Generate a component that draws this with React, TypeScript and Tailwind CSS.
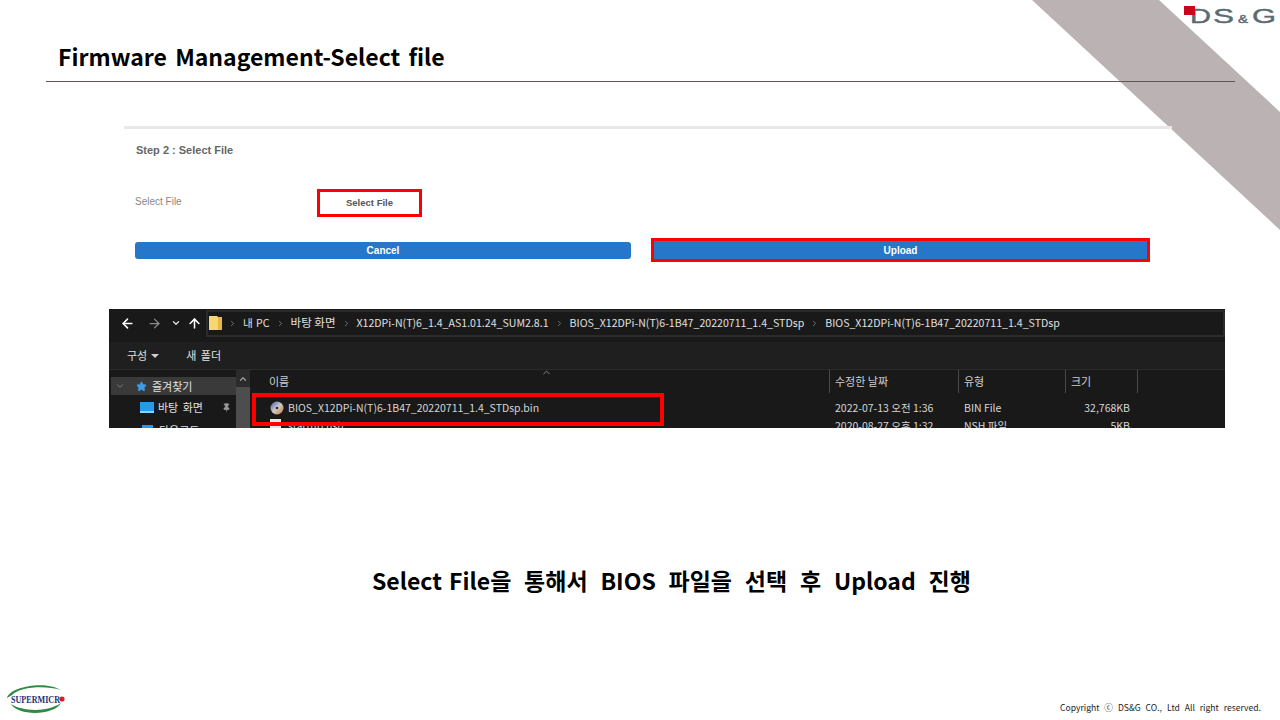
import React from 'react';
import { ArrowLeft, ArrowRight, ArrowUp, ChevronDown, ChevronRight, ChevronUp, Pin, Star } from 'lucide-react';

const FileRow = ({ icon, name, date, type, size }: { icon: React.ReactNode; name: string; date: string; type: string; size: string }) => (
    <div className="flex items-center h-[25px] text-[10.5px] text-[#d6d6d6]">
        <div className="w-[18px] ml-[20px] flex justify-start">{icon}</div>
        <div className="w-[547px] truncate">{name}</div>
        <div className="w-[129px]">{date}</div>
        <div className="w-[73px]">{type}</div>
        <div className="w-[93px] text-right">{size}</div>
    </div>
);

const Crumb = ({ label }: { label: string }) => (
    <>
        <ChevronRight size={9} className="text-[#8a8a8a] mx-[6px] shrink-0" />
        <span>{label}</span>
    </>
);

const DiscIcon = () => (
    <svg width="14" height="14" viewBox="0 0 14 14">
        <defs>
            <linearGradient id="disc" x1="0" y1="0" x2="1" y2="1">
                <stop offset="0" stopColor="#4a55b5" />
                <stop offset="0.5" stopColor="#cfc9c4" />
                <stop offset="1" stopColor="#c9762f" />
            </linearGradient>
        </defs>
        <circle cx="7" cy="7" r="6.5" fill="url(#disc)" />
        <circle cx="7" cy="7" r="1.8" fill="#2a2a2a" stroke="#eee" strokeWidth="0.6" />
    </svg>
);

const Explorer = () => (
    <div className="ml-[109px] w-[1116px] h-[119px] overflow-hidden bg-[#191919] flex flex-col font-['Noto_Sans_CJK_KR',sans-serif] text-[#e0e0e0]">
        {/* address bar */}
        <div className="h-[28px] mb-[5px] shrink-0 flex items-center bg-[#191919]">
            <ArrowLeft size={15} strokeWidth={2.5} className="ml-[11px] text-white" />
            <ArrowRight size={15} strokeWidth={2} className="ml-[12px] text-[#8c8c8c]" />
            <ChevronDown size={10} strokeWidth={3} className="ml-[9px] text-[#e0e0e0]" />
            <ArrowUp size={15} strokeWidth={2.5} className="ml-[6px] text-white" />
            <div className="ml-[4px] flex-1 h-[27px] border-2 border-[#2b2b2b] flex items-center text-[10.6px] whitespace-nowrap pl-[1px]">
                <svg width="13" height="16" viewBox="0 0 13 16" className="shrink-0">
                    <path d="M0 1h8l1 1h4v13H0z" fill="#f7d774" />
                    <path d="M9 2h4v13H9z" fill="#e8b93f" />
                </svg>
                <span className="contents [word-spacing:1px]"><Crumb label="내 PC" /></span>
                <span className="contents text-[11.5px]"><Crumb label="바탕 화면" /></span>
                <Crumb label="X12DPi-N(T)6_1.4_AS1.01.24_SUM2.8.1" />
                <Crumb label="BIOS_X12DPi-N(T)6-1B47_20220711_1.4_STDsp" />
                <Crumb label="BIOS_X12DPi-N(T)6-1B47_20220711_1.4_STDsp" />
            </div>
        </div>
        {/* toolbar */}
        <div className="h-[28px] shrink-0 flex items-center bg-[#1f1f1f] text-[11px] border-b border-[#2b2b2b]">
            <span className="ml-[18px]">구성</span>
            <span className="ml-[4px] w-0 h-0 border-x-[4px] border-x-transparent border-t-[4px] border-t-[#d0d0d0]" />
            <span className="ml-[27px] [word-spacing:2px]">새 폴더</span>
        </div>
        <div className="flex flex-1 min-h-0">
            {/* nav pane */}
            <div className="w-[127px] shrink-0 pt-[7px] text-[11px] bg-[#191919]">
                <div className="flex items-center h-[18px] bg-[#3a3a3a] ml-[2px]">
                    <ChevronDown size={10} className="ml-[4px] text-[#8a8a8a]" />
                    <Star size={11} className="ml-[11px] text-[#3d9be9] fill-[#3d9be9]" />
                    <span className="ml-[5px]">즐겨찾기</span>
                </div>
                <div className="flex items-center h-[24px] ml-[31px]">
                    <span className="w-[14px] h-[11px] bg-[#1f9bf0] border-b-2 border-[#8fd0ff]" />
                    <span className="ml-[4px] [word-spacing:2px]">바탕 화면</span>
                    <Pin size={9} className="ml-[19px] text-[#9a9a9a] fill-[#9a9a9a]" />
                </div>
                <div className="flex items-center h-[22px] ml-[33px]">
                    <span className="w-[11px] h-[11px] bg-[#1f9bf0]" />
                    <span className="ml-[6px]">다운로드</span>
                </div>
            </div>
            {/* scrollbar */}
            <div className="w-[14px] shrink-0 bg-[#2b2b2b] flex flex-col items-center">
                <ChevronUp size={10} strokeWidth={3} className="text-[#9a9a9a] mt-[4px] mb-[3px]" />
                <div className="w-full flex-1 bg-[#4d4d4d]" />
            </div>
            {/* file list */}
            <div className="flex-1 min-w-0 bg-[#191919]">
                <div className="relative flex items-center h-[23px] text-[11px] text-[#cfcfcf]">
                    <span className="ml-[19px] w-[560px]">이름</span>
                    <ChevronUp size={11} className="absolute left-[291px] top-[-3px] text-[#8a8a8a]" />
                    <span className="w-[129px] h-full flex items-center border-l border-[#4a4a4a] pl-[5px]">수정한 날짜</span>
                    <span className="w-[107px] h-full flex items-center border-l border-[#4a4a4a] pl-[5px]">유형</span>
                    <span className="w-[73px] h-full flex items-center border-x border-[#4a4a4a] pl-[5px]">크기</span>
                </div>
                <div className="relative pt-[2px]">
                    <div className="absolute left-[2px] top-0 w-[412px] h-[33px] border-4 border-[#ff0000]" />
                    <FileRow icon={<DiscIcon />} name="BIOS_X12DPi-N(T)6-1B47_20220711_1.4_STDsp.bin" date="2022-07-13 오전 1:36" type="BIN File" size="32,768KB" />
                    <div className="-mt-[7px]">
                        <FileRow icon={<span className="block w-[11px] h-[14px] bg-[#dfe8f2]" />} name="startup.nsh" date="2020-08-27 오후 1:32" type="NSH 파일" size="5KB" />
                    </div>
                </div>
            </div>
        </div>
    </div>
);

const App: React.FC = () => {
    return (
        <div className="relative w-[1280px] h-[720px] overflow-hidden bg-white flex flex-col font-['Noto_Sans_CJK_KR',sans-serif]">
            {/* diagonal band */}
            <svg className="absolute left-0 top-0" width="1280" height="720" viewBox="0 0 1280 720">
                <polygon points="1032,0 1159,0 1280,112 1280,230" fill="#bbb3b3" />
            </svg>

            {/* DS&G logo */}
            <svg className="absolute left-[1180px] top-0" width="100" height="30" viewBox="0 0 100 30" fontFamily="'Liberation Sans', sans-serif" fill="#5b6b72" stroke="#5b6b72" strokeWidth="0.4">
                <text x="10" y="23" fontSize="19.5" textLength="21" lengthAdjust="spacingAndGlyphs">D</text>
                <text x="33" y="23" fontSize="19.5" textLength="21" lengthAdjust="spacingAndGlyphs">S</text>
                <text x="58" y="23" fontSize="10" textLength="10" lengthAdjust="spacingAndGlyphs">&amp;</text>
                <text x="72" y="23" fontSize="19.5" textLength="24" lengthAdjust="spacingAndGlyphs">G</text>
                <rect x="4" y="6" width="11" height="9" fill="#d0021b" stroke="none" />
            </svg>

            {/* title */}
            <div className="relative h-[81px] shrink-0 pl-[58px] pt-[38px]">
                <h1 className="text-[23px] leading-[36px] font-bold text-black whitespace-nowrap [word-spacing:3px]">Firmware Management-Select file</h1>
            </div>
            <div className="relative ml-[46px] w-[1189px] h-px bg-[#5f5757] shrink-0" />

            {/* step panel */}
            <div className="relative ml-[124px] mt-[44px] w-[1048px] h-[183px] shrink-0 border-t-[3px] border-[#e8e8e8] font-['Liberation_Sans',sans-serif]">
                <div className="ml-[12px] mt-[14px] text-[11px] leading-[14px] font-bold text-[#666666]">Step 2 : Select File</div>
                <div className="flex mt-[32px] items-start">
                    <span className="ml-[11px] w-[182px] text-[10px] leading-[14px] text-[#888888] pt-[6px]">Select File</span>
                    <button className="w-[105px] h-[28px] border-[3px] border-[#ff0000] bg-white text-[9.5px] font-bold text-[#555555]">Select File</button>
                </div>
                <div className="flex mt-[21px] items-center">
                    <button className="ml-[11px] w-[496px] h-[17px] rounded-[3px] bg-[#2677c9] text-[10px] font-bold text-white">Cancel</button>
                    <button className="ml-[20px] w-[499px] h-[24px] border-[3px] border-[#ff0000] bg-[#2677c9] text-[10px] font-bold text-white">Upload</button>
                </div>
            </div>

            <Explorer />

            {/* caption */}
            <p className="relative mt-[133px] ml-[372px] text-[23px] leading-[38px] font-bold text-black whitespace-nowrap [word-spacing:7.6px]"><span className="[word-spacing:2px]">Select File을</span> 통해서 BIOS 파일을 선택 후 Upload 진행</p>

            {/* footer */}
            <div className="mt-auto flex items-end justify-between pb-[7px] pl-[5px] pr-[19px]">
                <svg width="62" height="30" viewBox="0 0 62 30">
                    <path d="M2 15C4 4 40 -3 56 7C40 2 14 4 7 12z" fill="#2e8b45" />
                    <path d="M6 21C16 28 42 30 56 20C50 32 14 34 6 21z" fill="#2e8b45" />
                    <text x="6" y="19.5" fontFamily="'Liberation Serif', serif" fontWeight="bold" fontSize="9.5" fill="#1c2f6e" textLength="49" lengthAdjust="spacingAndGlyphs">SUPERMICR</text>
                    <circle cx="57" cy="16" r="2.6" fill="#d0202a" />
                </svg>
                <span className="text-[8.6px] leading-[12px] text-[#222222] whitespace-nowrap [word-spacing:3px]">Copyright ⓒ DS&amp;G CO., Ltd All right reserved.</span>
            </div>
        </div>
    );
};

export default App;
